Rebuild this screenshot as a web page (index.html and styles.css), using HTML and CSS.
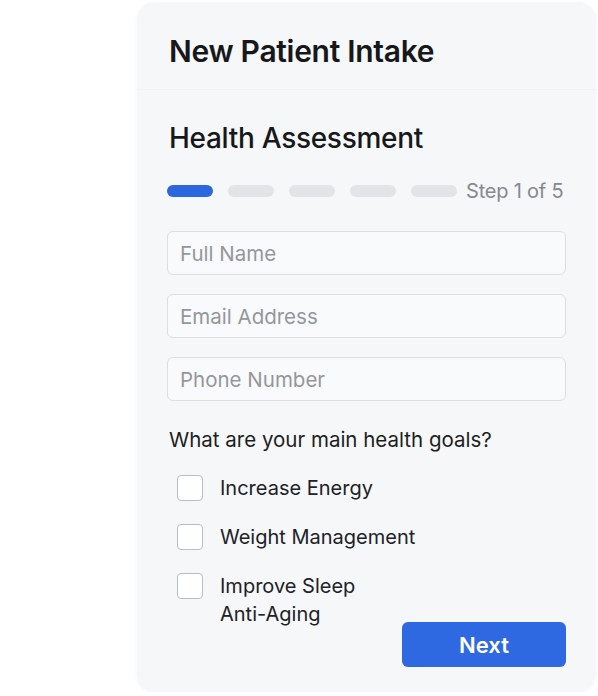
FILE: index.html
```html
<!DOCTYPE html>
<html lang="en">
  <head>
    <meta charset="utf-8">
    <meta name="viewport" content="width=device-width, initial-scale=1">
    <title>New Patient Intake</title>
    <link rel="stylesheet" href="styles.css">
  </head>
  <body>
    <div class="card">
      <h1>New Patient Intake</h1>
      <div class="divider"></div>
      <h2>Health Assessment</h2>
      <div class="progress">
        <span class="bar active"></span>
        <span class="bar"></span>
        <span class="bar"></span>
        <span class="bar"></span>
        <span class="bar"></span>
        <span class="step">Step 1 of 5</span>
      </div>
      <form>
        <input type="text" placeholder="Full Name">
        <input type="email" placeholder="Email Address">
        <input type="tel" placeholder="Phone Number">
        <p class="question">What are your main health goals?</p>
        <label class="goal"><span class="box"></span><span>Increase Energy</span></label>
        <label class="goal"><span class="box"></span><span>Weight Management</span></label>
        <label class="goal"><span class="box"></span><span>Improve Sleep<br>Anti-Aging</span></label>
        <div class="actions">
          <button type="button">Next</button>
        </div>
      </form>
    </div>
  </body>
</html>
```

FILE: styles.css
```css
body {
  margin: 0;
  background: #fff;
  font-family: Inter, "Noto Sans", sans-serif;
  color: #16181c;
}

.card {
  box-sizing: border-box;
  width: 459px;
  height: 690px;
  margin: 2px 0 0 137px;
  padding: 31px 28px 0 32px;
  background: #f6f7f9;
  border-radius: 18px;
  box-shadow: 0 1px 4px rgba(0, 0, 0, 0.04);
}

h1 {
  font-size: 30px;
  font-weight: 600;
  margin: 0;
  line-height: 36px;
  letter-spacing: -0.3px;
}

.divider {
  height: 1px;
  background: #f0f2f5;
  margin: 20px -28px 0 -32px;
}

h2 {
  font-size: 28px;
  font-weight: 500;
  margin: 30px 0 0;
  line-height: 36px;
  letter-spacing: -0.3px;
}

.progress {
  display: flex;
  align-items: center;
  gap: 15px;
  height: 24px;
  margin: 23px 0 0 -2px;
}

.bar {
  width: 46px;
  height: 12px;
  border-radius: 6px;
  background: #e2e4e8;
}

.bar.active {
  background: #2d67e0;
}

.step {
  margin-left: -6px;
  font-size: 20px;
  color: #85888e;
  letter-spacing: -0.2px;
}

form {
  display: flex;
  flex-direction: column;
  width: 399px;
  margin: 28px 0 0 -2px;
}

input {
  box-sizing: border-box;
  width: 100%;
  height: 44px;
  margin-bottom: 19px;
  padding: 0 12px;
  border: 1px solid #dcdee2;
  border-radius: 6px;
  background: #f9fafb;
  font-family: inherit;
  font-size: 20.5px;
  color: #222;
}

input::placeholder {
  color: #94979c;
}

.question {
  margin: 6px 0 20px 2px;
  font-size: 20.5px;
  line-height: 28px;
  color: #1c1e22;
}

.goal {
  display: flex;
  align-items: flex-start;
  gap: 17px;
  margin: 0 0 21px 10px;
  font-size: 20px;
  line-height: 28px;
  color: #202227;
}

.box {
  box-sizing: border-box;
  width: 26px;
  height: 26px;
  margin-top: 1px;
  border: 1.5px solid #b9bcc2;
  border-radius: 4px;
  background: #fff;
}

.actions {
  display: flex;
  justify-content: flex-end;
  margin-top: -27px;
}

button {
  width: 164px;
  height: 45px;
  border: 0;
  border-radius: 6px;
  background: #2f69e1;
  color: #fff;
  font-family: inherit;
  font-size: 22px;
  font-weight: 600;
}
```
